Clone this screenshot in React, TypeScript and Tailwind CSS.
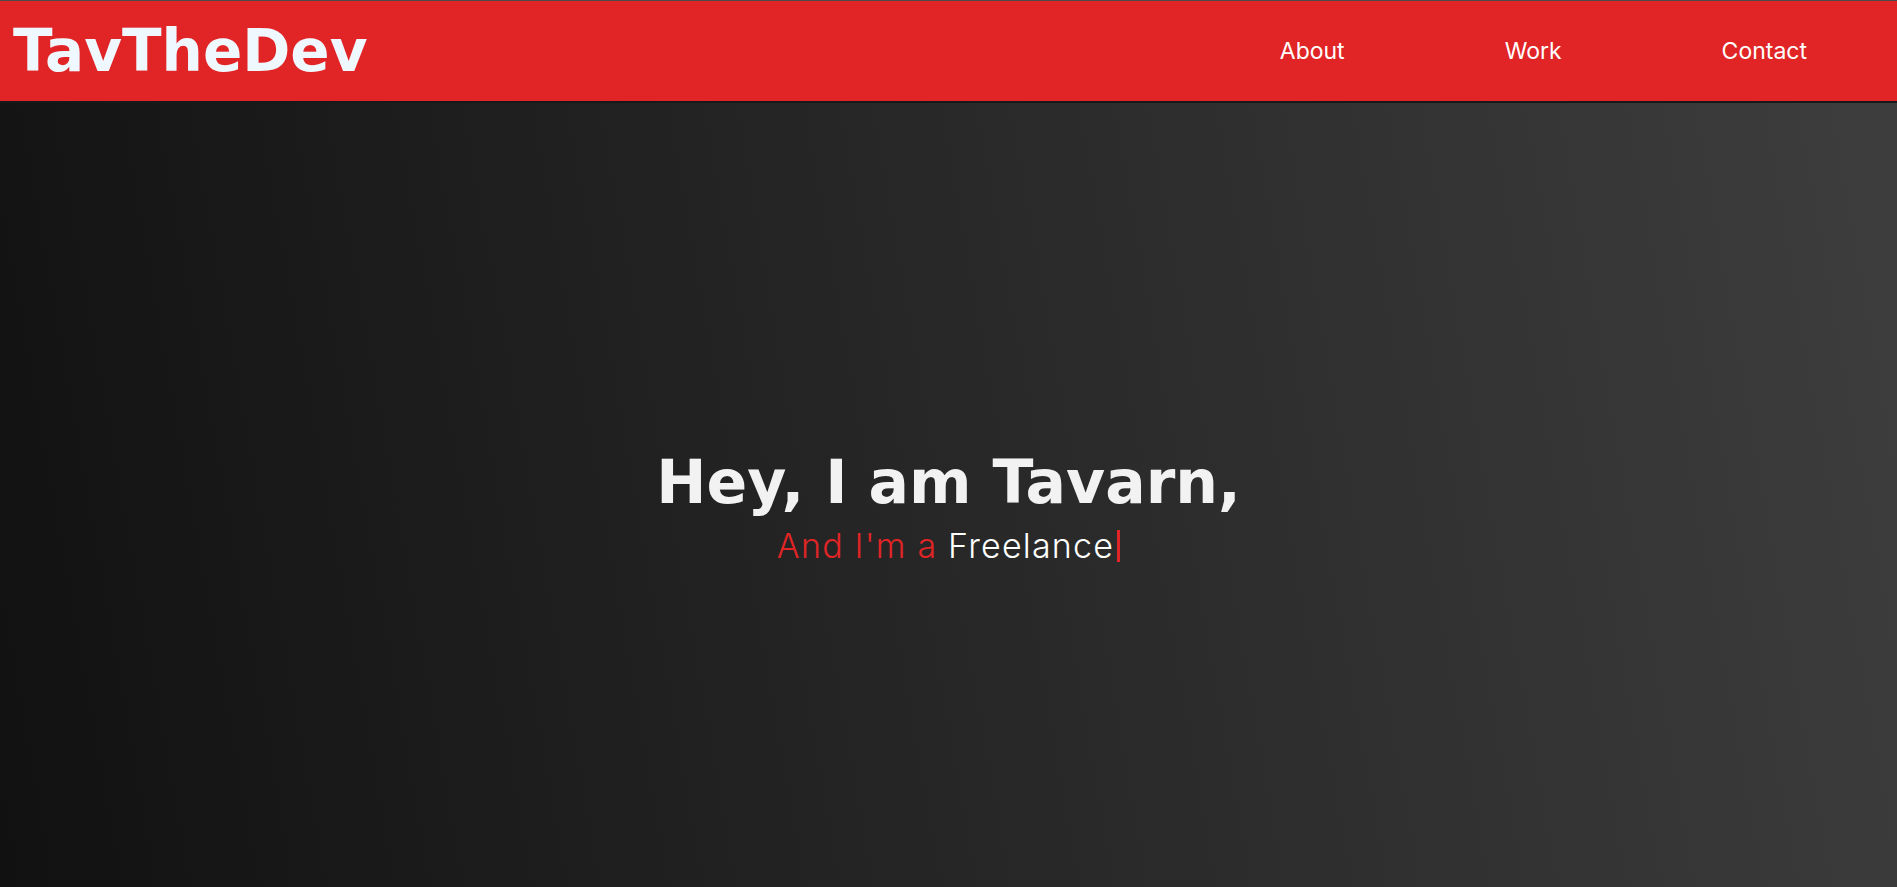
export default function App() {
  const links = ['About', 'Work', 'Contact'];

  return (
    <div className="min-h-screen w-full bg-[linear-gradient(80deg,#111111,#3f3e3e)]">
      {/* Header */}
      <nav className="flex h-[103px] items-center justify-between border-t border-t-[#4a4a4a] border-b-2 border-b-[#181818] bg-[#e12426] pl-[13px] pr-[90px]">
        <a
          href="#"
          className="text-[58px] font-bold leading-none text-[#f0f8ff]"
          style={{ fontFamily: "'DejaVu Sans', sans-serif" }}
        >
          TavTheDev
        </a>
        <ul
          className="flex items-center gap-[160px] text-[23px] text-white"
          style={{ fontFamily: "Inter, sans-serif" }}
        >
          {links.map((l) => (
            <li key={l}>
              <a href={`#${l.toLowerCase()}`}>{l}</a>
            </li>
          ))}
        </ul>
      </nav>

      {/* Hero */}
      <section className="flex h-[784px] flex-col items-center justify-center pt-[24px] text-center">
        <h1
          className="text-[60px] font-bold leading-[1.2] text-[#f2f2f2]"
          style={{ fontFamily: "'DejaVu Sans', sans-serif" }}
        >
          Hey, I am Tavarn,
        </h1>
        <p
          className="mt-[6px] flex items-center text-[34px] font-light leading-[1.3] tracking-[1.2px]"
          style={{ fontFamily: "Inter, sans-serif" }}
        >
          <span className="text-[#e12426]">And I'm a&nbsp;</span>
          <span className="text-white">Freelance</span>
          <span className="ml-[3px] inline-block h-[32px] w-[3px] bg-[#e12426]" />
        </p>
      </section>
    </div>
  );
}
